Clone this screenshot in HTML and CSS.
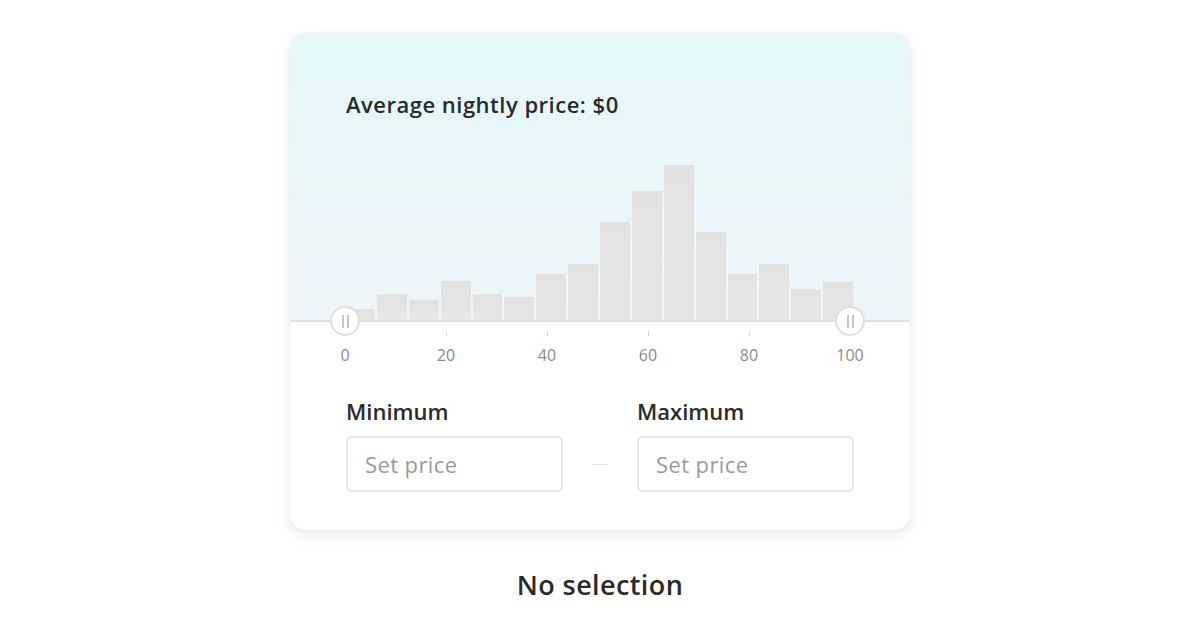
FILE: index.html
```html
<!DOCTYPE html>
<html lang="en">
<head>
<meta charset="utf-8">
<title>Price range</title>
<link rel="stylesheet" href="styles.css">
</head>
<body>
<div class="page">
  <div class="card">
    <div class="top">
      <h2 class="title">Average nightly price: $0</h2>
      <div class="bars">
        <span class="bar" style="height:11px"></span>
        <span class="bar" style="height:26px"></span>
        <span class="bar" style="height:20px"></span>
        <span class="bar" style="height:39px"></span>
        <span class="bar" style="height:26px"></span>
        <span class="bar" style="height:23px"></span>
        <span class="bar" style="height:46px"></span>
        <span class="bar" style="height:56px"></span>
        <span class="bar" style="height:98px"></span>
        <span class="bar" style="height:129px"></span>
        <span class="bar" style="height:155px"></span>
        <span class="bar" style="height:88px"></span>
        <span class="bar" style="height:46px"></span>
        <span class="bar" style="height:56px"></span>
        <span class="bar" style="height:31px"></span>
        <span class="bar" style="height:38px"></span>
      </div>
    </div>
    <span class="handle handle-min"><i></i><i></i></span>
    <span class="handle handle-max"><i></i><i></i></span>
    <div class="axis">
      <div class="tick-col"><span class="tick hidden"></span><span class="label">0</span></div>
      <div class="tick-col"><span class="tick"></span><span class="label">20</span></div>
      <div class="tick-col"><span class="tick"></span><span class="label">40</span></div>
      <div class="tick-col"><span class="tick"></span><span class="label">60</span></div>
      <div class="tick-col"><span class="tick"></span><span class="label">80</span></div>
      <div class="tick-col"><span class="tick hidden"></span><span class="label">100</span></div>
    </div>
    <div class="fields">
      <label class="field">
        <span class="field-label">Minimum</span>
        <span class="input">Set price</span>
      </label>
      <span class="dash"></span>
      <label class="field">
        <span class="field-label">Maximum</span>
        <span class="input">Set price</span>
      </label>
    </div>
  </div>
  <p class="caption">No selection</p>
</div>
</body>
</html>
```

FILE: styles.css
```css
* { box-sizing: border-box; }

html, body {
  margin: 0;
  padding: 0;
  background: #ffffff;
}

body {
  font-family: "Open Sans", "Noto Sans", "Liberation Sans", sans-serif;
  color: #2a2a2a;
}

.page {
  width: 1200px;
  height: 636px;
  display: flex;
  flex-direction: column;
  align-items: center;
  padding-top: 33px;
}

.card {
  position: relative;
  width: 620px;
  height: 497px;
  border-radius: 16px;
  overflow: hidden;
  background: #ffffff;
  box-shadow: 0 6px 18px rgba(0, 0, 0, 0.07), 0 1px 4px rgba(0, 0, 0, 0.05);
}

.top {
  height: 289px;
  padding-top: 56px;
  background: linear-gradient(180deg, #e4f9f9 0%, #e9f7f9 50%, #eef5fa 100%);
  border-bottom: 2px solid #e0e0e0;
  display: flex;
  flex-direction: column;
}

.title {
  margin: 0 0 0 56px;
  font-size: 22px;
  line-height: 30px;
  font-weight: 600;
  letter-spacing: 0.5px;
  color: #2a2a2a;
}

.bars {
  margin-top: auto;
  margin-left: 55px;
  width: 508px;
  height: 170px;
  display: flex;
  align-items: flex-end;
  gap: 2px;
}

.bar {
  flex: 1 1 0;
  background: linear-gradient(180deg, #e2e2e2 0%, #e6e6e6 100%);
}

.handle {
  position: absolute;
  top: 273px;
  width: 30px;
  height: 30px;
  border-radius: 50%;
  background: #ffffff;
  border: 2px solid #dedede;
  display: flex;
  justify-content: center;
  align-items: center;
  gap: 3px;
}

.handle i {
  display: block;
  width: 2px;
  height: 13px;
  background: #c6c6c6;
}

.handle-min { left: 40px; }
.handle-max { left: 545px; }

.axis {
  margin-left: 4.5px;
  display: grid;
  grid-template-columns: repeat(6, 101px);
  padding-top: 9px;
}

.tick-col {
  display: flex;
  flex-direction: column;
  align-items: center;
}

.tick {
  width: 1px;
  height: 5px;
  background: #d6d6d6;
}

.tick.hidden { visibility: hidden; }

.label {
  margin-top: 9px;
  font-size: 16px;
  line-height: 20px;
  color: #8a8a8a;
}

.fields {
  margin: 31px 0 0 56px;
  display: grid;
  grid-template-columns: 217px 74px 217px;
  align-items: end;
}

.field {
  display: flex;
  flex-direction: column;
  gap: 10px;
}

.field-label {
  font-size: 22px;
  line-height: 30px;
  font-weight: 600;
  color: #2a2a2a;
}

.input {
  height: 56px;
  border: 2px solid #e6e6e6;
  border-radius: 6px;
  padding-left: 17px;
  display: flex;
  align-items: center;
  font-size: 22px;
  letter-spacing: 0.4px;
  color: #9a9a9a;
}

.dash {
  justify-self: center;
  align-self: end;
  margin-bottom: 27px;
  width: 14px;
  height: 1px;
  background: #dcdcdc;
}

.caption {
  margin: 37px 0 0;
  font-size: 27px;
  line-height: 36px;
  font-weight: 600;
  letter-spacing: 0.4px;
  color: #2a2a2a;
}
```
